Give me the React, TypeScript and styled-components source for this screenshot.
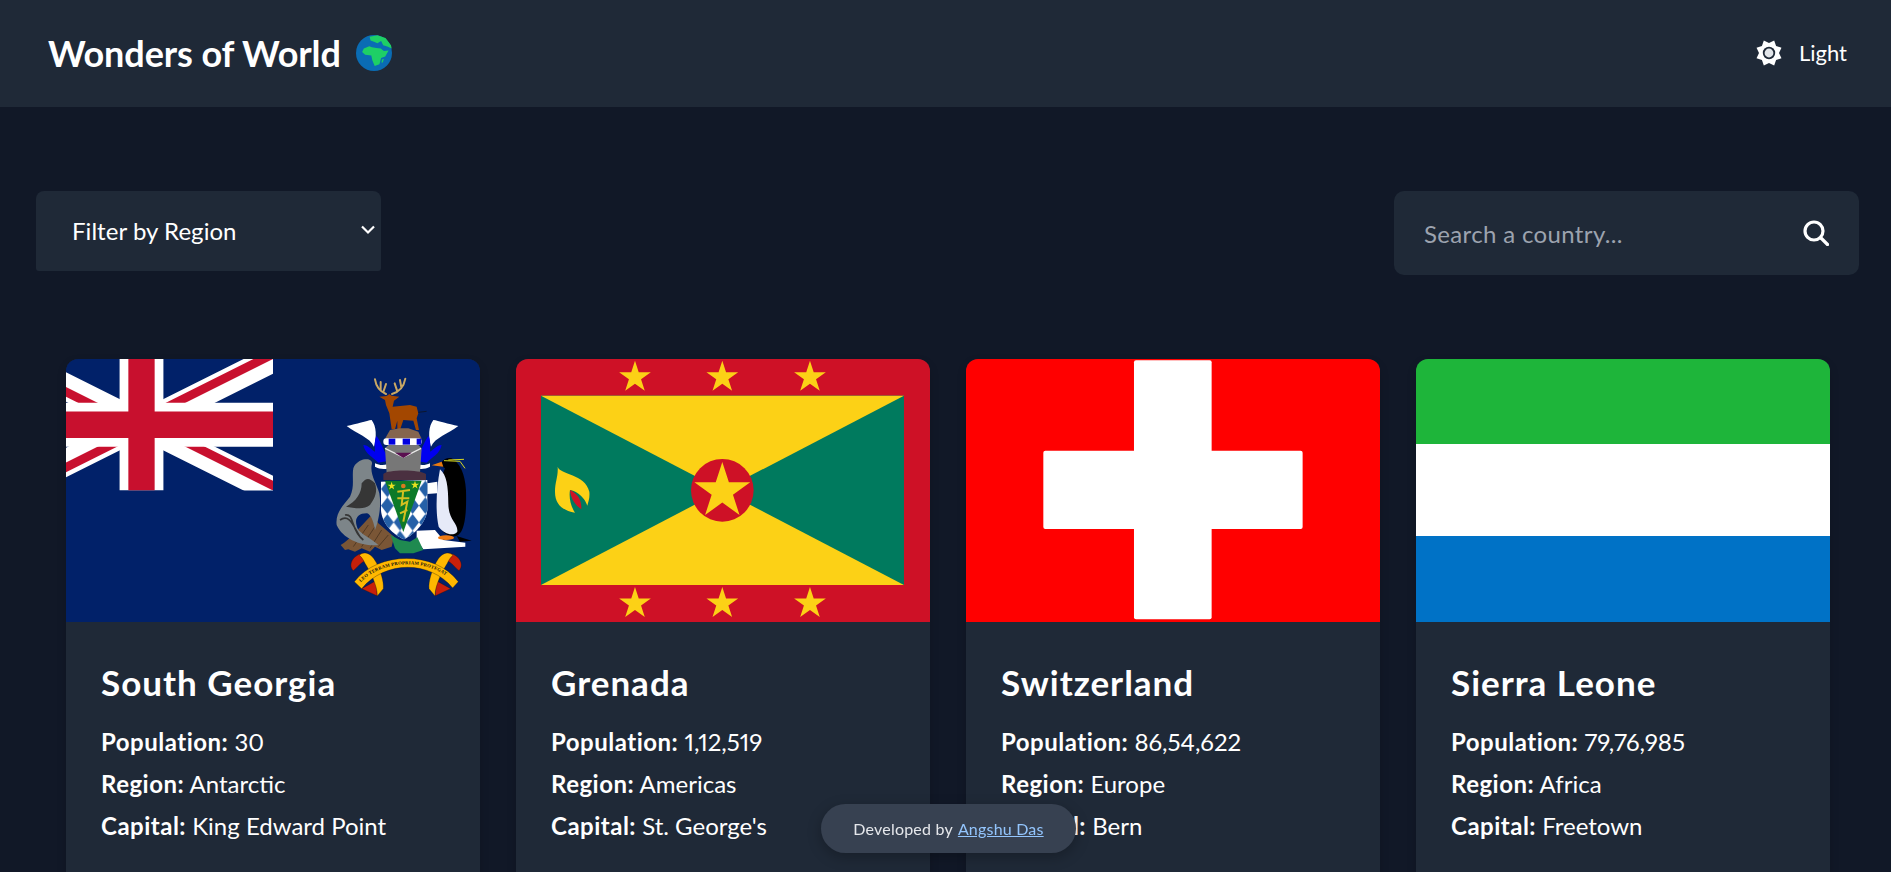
import React from 'react';
import styled, { createGlobalStyle } from 'styled-components';

const GlobalStyle = createGlobalStyle`
  html, body {
    margin: 0;
    padding: 0;
    background: #111827;
    font-family: 'Lato', 'Open Sans', sans-serif;
    font-variant-numeric: proportional-nums;
    color: #fff;
  }
`;

const Page = styled.div`
  height: 100vh;
  overflow: hidden;
  background: #111827;
`;

const Header = styled.header`
  height: 107px;
  padding: 0 44px 2px 48px;
  box-sizing: border-box;
  display: flex;
  align-items: center;
  justify-content: space-between;
  background: #1f2937;
`;

const Brand = styled.div`
  display: flex;
  align-items: center;
  gap: 15px;
`;

const BrandName = styled.h1`
  margin: 0;
  font-size: 36px;
  font-weight: 700;
  line-height: 1;
  letter-spacing: -0.1px;
`;

const ThemeToggle = styled.button`
  display: flex;
  align-items: center;
  gap: 16px;
  padding: 0;
  border: 0;
  background: none;
  color: #fff;
  font: inherit;
  font-size: 22px;
`;

const Controls = styled.section`
  padding: 84px 32px 0 36px;
  display: flex;
  align-items: flex-start;
  justify-content: space-between;
`;

const RegionSelect = styled.div`
  box-sizing: border-box;
  width: 345px;
  height: 80px;
  padding: 0 5px 2px 36px;
  display: flex;
  align-items: center;
  justify-content: space-between;
  background: #1f2937;
  border-radius: 8px 8px 3px 3px;
  font-size: 24px;
  letter-spacing: 0.05px;
`;

const SearchBox = styled.div`
  box-sizing: border-box;
  width: 465px;
  height: 84px;
  padding: 0 30px 0 28px;
  display: flex;
  align-items: center;
  justify-content: space-between;
  background: #1f2937;
  border-radius: 10px;
`;

const SearchInput = styled.input`
  flex: 1;
  min-width: 0;
  padding: 0 2px;
  border: 0;
  outline: 0;
  background: none;
  color: #fff;
  font: inherit;
  font-size: 24px;
  letter-spacing: 0.35px;

  &::placeholder {
    color: #9ca3af;
    opacity: 1;
  }
`;

const Grid = styled.main`
  padding: 84px 61px 0 66px;
  display: grid;
  grid-template-columns: repeat(4, 414px);
  gap: 36px;
`;

const Card = styled.article`
  border-radius: 12px;
  overflow: hidden;
  background: #1f2937;
  box-shadow: 0 4px 10px rgba(0, 0, 0, 0.15);
`;

const Flag = styled.svg`
  display: block;
  width: 414px;
  height: 263px;
`;

const CardBody = styled.div`
  padding: 38px 35px 44px;
`;

const CountryName = styled.h2`
  margin: 0 0 17px;
  font-size: 35px;
  font-weight: 700;
  line-height: 44px;
  letter-spacing: 1px;
`;

const Fact = styled.p`
  margin: 0;
  font-size: 24px;
  line-height: 42px;
  font-weight: 400;

  strong {
    font-weight: 700;
    letter-spacing: 0.5px;
  }
`;

const Credit = styled.footer`
  position: fixed;
  left: 821px;
  bottom: 19px;
  width: 255px;
  height: 49px;
  display: flex;
  align-items: center;
  justify-content: center;
  gap: 5px;
  border-radius: 25px;
  background: #374151;
  box-shadow: 0 4px 14px rgba(0, 0, 0, 0.25);
  color: #e5e7eb;
  font-size: 16px;
  letter-spacing: 0.2px;

  a {
    color: #93c5fd;
    text-decoration: underline;
  }
`;

const Globe = () => (
  <svg width="36" height="36" viewBox="45 32 106 106">
    <circle cx="98" cy="85" r="53" fill="#0a6cb4" />
    <path
      d="M85 37 L108 33 L132 41 L148 62 L150 72 L137 66 L125 62 L119 50 L108 56 L98 52 L88 48 Z"
      fill="#1ecf66"
    />
    <path
      d="M68 72 L84 65 L92 68 L105 70 L118 72 L127 79 L141 78 L131 95 L119 100 L114 118 L100 123 L93 106 L90 92 L72 90 L63 82 Z"
      fill="#1ecf66"
    />
    <path d="M122 104 L127 102 L124 113 L120 113 Z" fill="#1ecf66" />
  </svg>
);

const sunPoints = () => {
  const pts: string[] = [];
  for (let i = 0; i < 16; i++) {
    const rad = i % 2 === 0 ? 10 : 13.5;
    const a = (Math.PI / 8) * i;
    pts.push(`${14 + rad * Math.cos(a)},${14 + rad * Math.sin(a)}`);
  }
  return pts.join(' ');
};

const SunIcon = () => (
  <svg width="28" height="28" viewBox="0 0 28 28">
    <polygon points={sunPoints()} fill="#fff" />
    <circle cx="14" cy="14" r="6.2" fill="#1f2937" />
    <circle cx="14" cy="14" r="4.4" fill="#e2e5e9" />
  </svg>
);

const SearchIcon = () => (
  <svg width="26" height="26" viewBox="0 0 26 26" fill="none" stroke="#fff" strokeWidth="3.2">
    <circle cx="11" cy="11" r="9" />
    <path d="M18 18 L24.5 24.5" strokeLinecap="round" />
  </svg>
);

const Chevron = () => (
  <svg width="16" height="10" viewBox="0 0 16 10" fill="none" stroke="#fff" strokeWidth="2.2">
    <path d="M2 1.5 L8 7.5 L14 1.5" />
  </svg>
);

const star = (cx: number, cy: number, r: number) => {
  const pts: string[] = [];
  for (let i = 0; i < 10; i++) {
    const rad = i % 2 === 0 ? r : r * 0.382;
    const a = (Math.PI / 5) * i - Math.PI / 2;
    pts.push(`${cx + rad * Math.cos(a)},${cy + rad * Math.sin(a)}`);
  }
  return pts.join(' ');
};

const UnionJack = () => (
  <svg x="-56" y="0" width="263" height="131.5" viewBox="0 0 60 30">
    <clipPath id="jack-clip">
      <path d="M30,15h30v15zv15h-30zh-30v-15zv-15h30z" />
    </clipPath>
    <path d="M0,0L60,30M60,0L0,30" stroke="#fff" strokeWidth="6" />
    <path d="M0,0L60,30M60,0L0,30" clipPath="url(#jack-clip)" stroke="#c8102e" strokeWidth="4" />
    <path d="M30,0v30M0,15h60" stroke="#fff" strokeWidth="10" />
    <path d="M30,0v30M0,15h60" stroke="#c8102e" strokeWidth="6" />
  </svg>
);

// one side of the crest, the other side is the same thing mirrored
const Mantling = () => (
  <>
    <path
      d="M80 228 C110 222 140 212 155 210 C170 230 170 260 162 290 C150 262 110 252 80 228 Z"
      fill="#fff"
    />
    <path
      d="M170 258 C185 280 190 300 200 315 C210 325 202 336 190 335 L175 338 C160 322 135 312 130 285 C145 285 155 300 165 305 C165 290 162 270 170 258 Z"
      fill="#0000f0"
    />
    <path d="M165 340 C185 350 205 345 215 333 L216 350 C200 360 180 358 165 350 Z" fill="#fff" />
  </>
);

const RibbonEnd = () => (
  <>
    <path d="M100 662 C82 645 100 612 132 610 L138 632 C122 636 115 650 100 662 Z" fill="#c8200a" stroke="#111" />
    <path d="M125 716 L172 738 L168 692 Z" fill="#c8200a" stroke="#111" />
    <path
      d="M118 616 C135 600 155 612 168 636 C182 662 192 695 190 716 L172 738 C172 705 150 665 135 640 C130 630 126 622 118 616 Z"
      fill="#ffb800"
      stroke="#111"
    />
  </>
);

const Arms = () => (
  <g transform="translate(254 -9) scale(0.3333)">
    <defs>
      <pattern id="arms-checks" width="38" height="50" patternUnits="userSpaceOnUse" x="183" y="392">
        <polygon points="19,0 38,25 19,50 0,25" fill="#2560a8" />
      </pattern>
    </defs>
    {/* stag and antlers */}
    <g fill="none" stroke="#c9a864" strokeWidth="6" strokeLinecap="round">
      <path d="M198 132 C180 124 168 108 165 88 M182 120 L182 96 M190 126 L198 102" />
      <path d="M216 132 C238 126 252 108 256 86 M232 124 L224 100 M244 112 L240 90" />
    </g>
    <path
      d="M178 140 L200 138 L208 132 L215 137 L238 140 L222 152 L218 170 L270 165 L290 170 L295 190 L290 205 L297 240 L288 240 L280 212 L250 210 L240 240 L232 240 L232 212 L225 238 L215 238 L208 190 L198 165 L195 150 Z"
      fill="#a34700"
    />
    <path d="M295 187 L320 184" stroke="#111" strokeWidth="2" />
    <path d="M195 266 L210 240 L240 235 L265 235 L295 245 L305 266 Z" fill="#85654e" />
    <Mantling />
    <g transform="translate(495 0) scale(-1 1)">
      <Mantling />
    </g>
    {/* helm */}
    <path d="M205 285 L295 285 L305 295 L300 370 L200 370 L195 295 Z" fill="#777" />
    <path d="M195 295 L250 322 L303 295" fill="none" stroke="#e8e8e8" strokeWidth="4" />
    <path d="M225 308 L275 308 L250 324 Z" fill="#5a1050" />
    <path d="M190 372 C200 358 300 358 318 372 L318 390 L190 390 Z" fill="#4a3040" />
    <rect x="190" y="265" width="115" height="20" rx="9" fill="#fff" />
    <rect x="206" y="266" width="20" height="18" fill="#0000e0" />
    <rect x="248" y="266" width="22" height="18" fill="#0000e0" />
    <rect x="290" y="266" width="14" height="18" fill="#0000e0" />
    {/* rocks and the sea lion */}
    <path
      d="M62 585 C90 570 120 530 155 495 L175 520 L222 560 L215 590 L185 600 L165 590 L150 605 L125 595 L105 605 L85 598 L75 600 Z"
      fill="#7a5636"
    />
    <path
      d="M100 590 L145 525 M125 590 L165 530 M150 595 L185 540 M175 590 L205 555"
      stroke="#3c2a1a"
      strokeWidth="2"
    />
    <path
      d="M135 328 C150 325 160 335 155 345 C150 375 170 400 178 430 C185 470 175 515 165 540 C160 510 150 490 140 490 C110 490 100 510 115 540 C135 560 160 570 175 585 C130 590 70 570 50 525 C45 490 70 465 90 440 C105 410 95 380 100 355 C105 340 120 330 135 328 Z"
      fill="#7d8589"
    />
    <path
      d="M125 400 C140 380 150 385 165 400 C175 430 160 450 150 465 C130 482 100 472 78 470 C108 455 125 430 125 400 Z"
      fill="#363636"
    />
    <path d="M60 510 C90 490 100 530 120 560 M75 495 C105 490 90 540 130 570" fill="none" stroke="#363636" strokeWidth="5" />
    {/* snow and penguin */}
    <path d="M290 542 L345 540 L370 570 L436 578 L436 590 L310 598 L290 570 Z" fill="#fff" />
    <path d="M322 400 L352 395 L352 430 L322 432 Z" fill="#fff" />
    <path
      d="M375 355 C355 400 350 480 360 530 C370 555 400 565 415 555 C435 540 440 490 438 420 C435 370 420 340 395 325 C375 320 365 335 360 345 Z"
      fill="#000"
    />
    <path
      d="M360 358 C350 410 345 480 356 530 C372 552 400 560 412 545 C415 520 385 510 385 460 C385 410 380 375 360 358 Z"
      fill="#e6eaf8"
    />
    <path d="M335 346 L365 335 L370 350 Z" fill="#e87a10" />
    <path d="M372 332 L420 334 L435 355 M385 330 L432 328" fill="none" stroke="#d8d820" strokeWidth="3" />
    <ellipse cx="378" cy="563" rx="24" ry="7" fill="#f07a10" />
    <path d="M410 558 L455 572 L420 575 Z" fill="#000" />
    {/* shield */}
    <path d="M183 395 L322 390 L322 480 C318 520 280 555 252 568 C220 555 185 520 183 480 Z" fill="#fff" />
    <path d="M183 395 L322 390 L322 480 C318 520 280 555 252 568 C220 555 185 520 183 480 Z" fill="url(#arms-checks)" />
    <path d="M195 392 L305 392 L250 546 Z" fill="#0d7a28" />
    <polygon points={star(215, 408, 13)} fill="#e8e020" />
    <polygon points={star(285, 405, 13)} fill="#e8e020" />
    <circle cx="250" cy="408" r="7" fill="#d87a20" />
    <path
      d="M232 425 L270 420 M250 420 L245 465 L262 455 L250 515 M232 445 L268 445 M240 490 L262 480"
      fill="none"
      stroke="#d4c020"
      strokeWidth="6"
    />
    <path d="M212 555 L240 570 L270 575 L292 562 L310 600 L280 610 L240 610 L225 595 Z" fill="#1f8a50" />
    {/* motto */}
    <RibbonEnd />
    <g transform="translate(517 0) scale(-1 1)">
      <RibbonEnd />
    </g>
    <path
      d="M103 695 C175 602 345 602 415 695 L398 714 C330 631 195 631 125 716 Z"
      fill="#ffb800"
      stroke="#111"
    />
    <path id="motto-line" d="M122 697 C192 625 332 625 400 696" fill="none" />
    <text fontFamily="'Liberation Serif', serif" fontSize="14" fontWeight="700" fill="#111" letterSpacing="0.7">
      <textPath href="#motto-line">LEO TERRAM PROPRIAM PROTEGAT</textPath>
    </text>
  </g>
);

const SouthGeorgiaFlag = () => (
  <Flag viewBox="0 0 414 263">
    <rect width="414" height="263" fill="#012169" />
    <UnionJack />
    <Arms />
  </Flag>
);

const GrenadaFlag = () => (
  <Flag viewBox="0 0 414 263">
    <g transform="translate(-6 -9) scale(0.3333)">
      <rect x="0" y="0" width="1320" height="840" fill="#ce1126" />
      <rect x="93" y="137" width="1089" height="568" fill="#007a5e" />
      <polygon points="93,137 1182,137 637,421" fill="#fcd116" />
      <polygon points="93,705 1182,705 637,421" fill="#fcd116" />
      <circle cx="637" cy="421" r="94" fill="#ce1126" />
      <polygon points={star(637, 424, 88)} fill="#fcd116" />
      {[375, 637, 900].map((x) => (
        <React.Fragment key={x}>
          <polygon points={star(x, 82, 50)} fill="#fcd116" />
          <polygon points={star(x, 761, 50)} fill="#fcd116" />
        </React.Fragment>
      ))}
      <path
        d="M143 350 C150 375 225 370 238 425 C240 445 235 455 232 467 C225 445 205 425 180 420 C176 445 183 470 195 488 C160 482 135 465 135 425 C135 395 145 380 143 350 Z"
        fill="#fcd116"
      />
      <path d="M180 420 C200 430 215 445 214 478 C195 465 182 445 180 420 Z" fill="#ce1126" />
    </g>
  </Flag>
);

const SwissFlag = () => (
  <Flag viewBox="0 0 414 263">
    <rect width="414" height="263" fill="#ff0000" />
    <g transform="translate(-6 -9) scale(0.3333)" fill="#fff">
      <rect x="522" y="31" width="233" height="777" rx="6" />
      <rect x="250" y="302" width="778" height="235" rx="6" />
    </g>
  </Flag>
);

const SierraLeoneFlag = () => (
  <Flag viewBox="0 0 414 263">
    <rect width="414" height="85" fill="#1eb53a" />
    <rect y="85" width="414" height="92" fill="#fff" />
    <rect y="177" width="414" height="86" fill="#0072c6" />
  </Flag>
);

const countries = [
  { name: 'South Georgia', population: '30', region: 'Antarctic', capital: 'King Edward Point', flag: <SouthGeorgiaFlag /> },
  { name: 'Grenada', population: '1,12,519', region: 'Americas', capital: "St. George's", flag: <GrenadaFlag /> },
  { name: 'Switzerland', population: '86,54,622', region: 'Europe', capital: 'Bern', flag: <SwissFlag /> },
  { name: 'Sierra Leone', population: '79,76,985', region: 'Africa', capital: 'Freetown', flag: <SierraLeoneFlag /> },
];

export default function App() {
  return (
    <Page>
      <GlobalStyle />
      <Header>
        <Brand>
          <BrandName>Wonders of World</BrandName>
          <Globe />
        </Brand>
        <ThemeToggle>
          <SunIcon />
          Light
        </ThemeToggle>
      </Header>
      <Controls>
        <RegionSelect>
          Filter by Region
          <Chevron />
        </RegionSelect>
        <SearchBox>
          <SearchInput placeholder="Search a country..." />
          <SearchIcon />
        </SearchBox>
      </Controls>
      <Grid>
        {countries.map((c) => (
          <Card key={c.name}>
            {c.flag}
            <CardBody>
              <CountryName>{c.name}</CountryName>
              <Fact>
                <strong>Population:</strong> {c.population}
              </Fact>
              <Fact>
                <strong>Region:</strong> {c.region}
              </Fact>
              <Fact>
                <strong>Capital:</strong> {c.capital}
              </Fact>
            </CardBody>
          </Card>
        ))}
      </Grid>
      <Credit>
        Developed by <a href="#angshu">Angshu Das</a>
      </Credit>
    </Page>
  );
}
